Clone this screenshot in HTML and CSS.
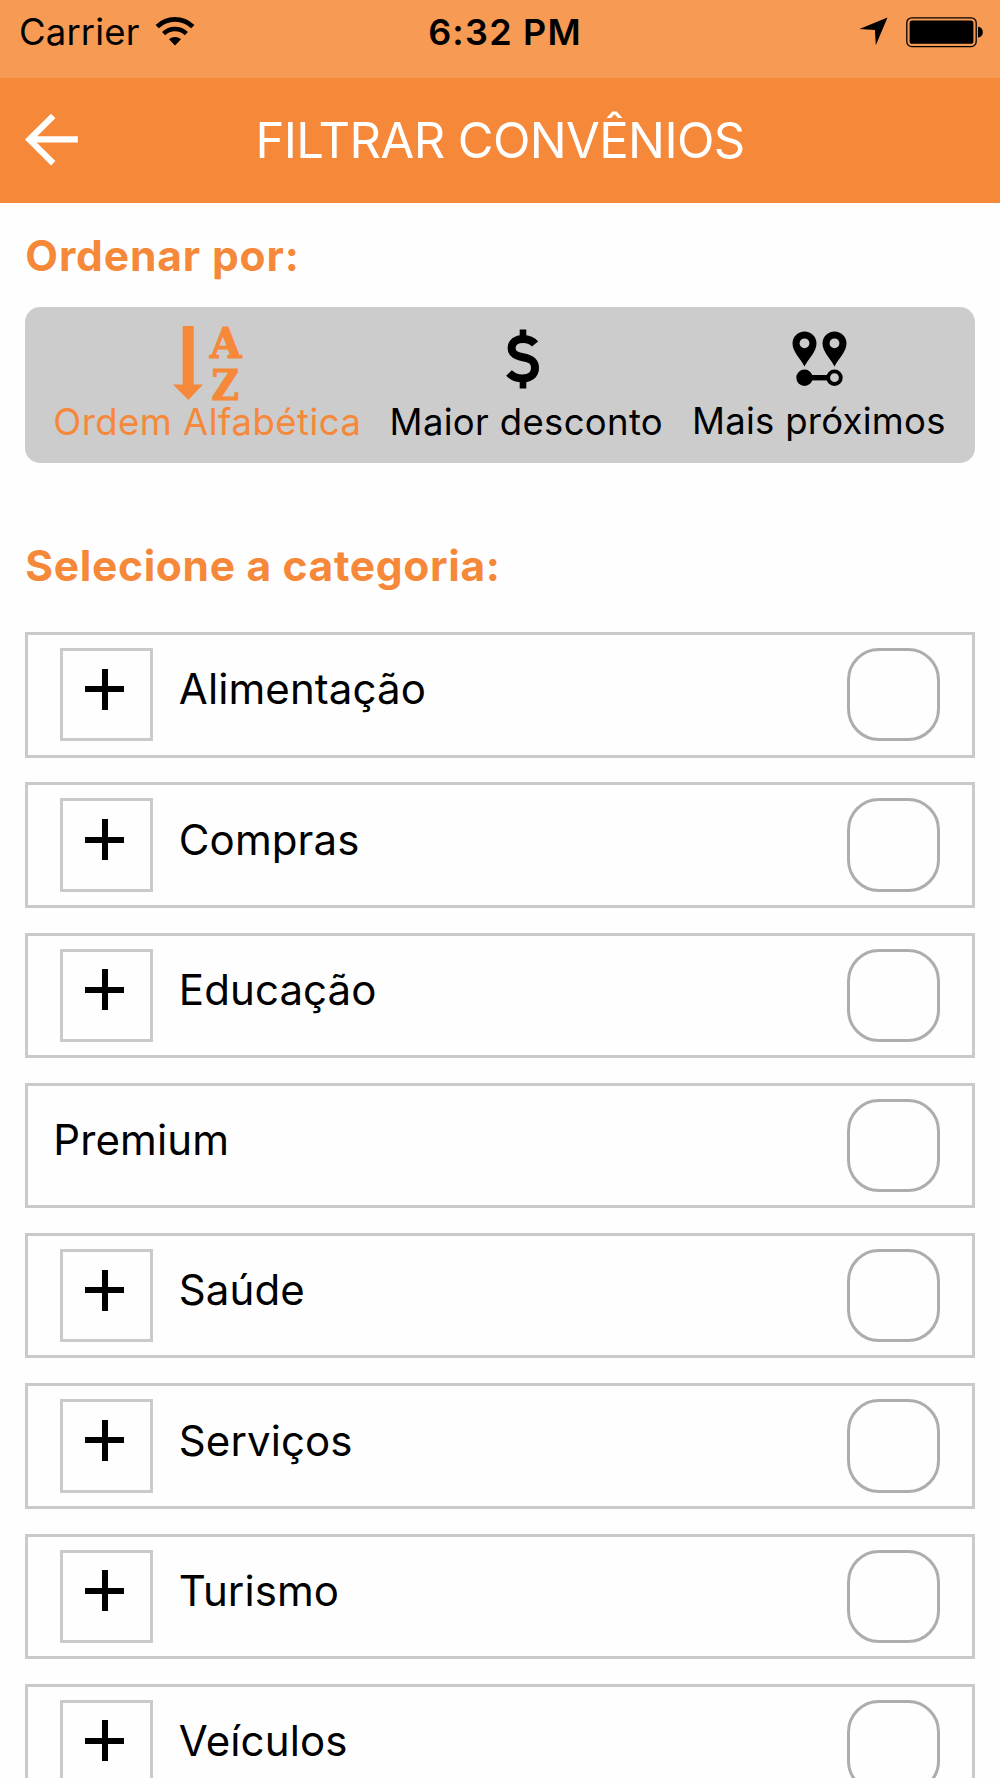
FILE: index.html
```html
<!DOCTYPE html>
<html lang="pt-BR">
<head>
<meta charset="utf-8">
<title>Filtrar convênios</title>
<link rel="stylesheet" href="styles.css">
</head>
<body>
<div class="status-bar">
  <div class="status-left">
    <span class="carrier">Carrier</span>
    <svg class="wifi" width="40" height="30" viewBox="0 0 40 30" fill="none" stroke="#000">
      <path d="M2.200 9.600a25.500 25.500 0 0 1 35.600 0" stroke-width="4.600"/>
      <path d="M8.600 16.600a16.400 16.400 0 0 1 22.800 0" stroke-width="4.400"/>
      <path d="M20 28.500l-6-6.200a8.700 8.700 0 0 1 12 0z" fill="#000" stroke="none"/>
    </svg>
  </div>
  <span class="time">6:32 PM</span>
  <div class="status-right">
    <svg width="29" height="29" viewBox="0 0 29 29"><path d="M28.500.5L16.800 28.200l-.9-15.300L.5 12z"/></svg>
    <svg width="78" height="31" viewBox="0 0 78 31">
      <rect x=".8" y=".8" width="69.400" height="28.800" rx="5" fill="none" stroke="#000" stroke-width="1.300"/>
      <rect x="3.600" y="3.600" width="63.800" height="23.200" rx="2.600"/>
      <path d="M72 9.800c6.400 0 6.400 10.800 0 10.800z"/>
    </svg>
  </div>
</div>
<header class="nav-bar">
  <svg class="back" width="54" height="54" viewBox="0 0 54 54" fill="none" stroke="#fff" stroke-width="6.200">
    <path d="M28.200 3L4.400 26.600l23.800 23.600M4 26.400h48.800"/>
  </svg>
  <h1 class="title">FILTRAR CONVÊNIOS</h1>
</header>
<main class="content">
  <h2 class="heading">Ordenar por:</h2>
  <div class="segments">
    <div class="segment alpha active">
      <svg width="70" height="76" viewBox="0 0 70 76">
        <path d="M9.700 2h11v58.500H30L15.300 76 0 60.500h9.700z"/>
        <text class="slab" x="37" y="33.500" textLength="31.500" lengthAdjust="spacingAndGlyphs">A</text>
        <text class="slab" x="38.500" y="75.500" textLength="27.500" lengthAdjust="spacingAndGlyphs">Z</text>
      </svg>
      <span>Ordem Alfabética</span>
    </div>
    <div class="segment discount">
      <svg width="34" height="60" viewBox="0 0 34 60" fill="none" stroke="#000">
        <path d="M17 .5v8M17 51v8.500" stroke-width="6.600"/>
        <path d="M29 15C26 11.200 22 9.900 17.200 9.900c-7 0-11.600 3.600-11.600 9.200 0 5.800 4 7.800 11.200 9.100 8 1.400 12.200 3.800 12.200 10.800 0 6.600-5 10.400-12.400 10.400-5.600 0-10-1.800-13.600-5.400" stroke-width="8"/>
      </svg>
      <span>Maior desconto</span>
    </div>
    <div class="segment nearby">
      <svg width="56" height="56" viewBox="0 0 56 56">
        <path fill-rule="evenodd" d="M12.500 35.500C9.500 28.500.5 21 .5 12.400a12 12 0 0 1 24 0C24.500 21 15.500 28.500 12.500 35.500zM12.500 7.400a4.900 4.900 0 1 0 0 9.800 4.900 4.900 0 0 0 0-9.800z"/>
        <path fill-rule="evenodd" d="M42.500 35.500C39.500 28.500 30.500 21 30.500 12.400a12 12 0 0 1 24 0C54.500 21 45.500 28.500 42.500 35.500zM42.500 7.400a4.900 4.900 0 1 0 0 9.800 4.900 4.900 0 0 0 0-9.800z"/>
        <circle cx="12.500" cy="46.700" r="8.200"/>
        <path d="M12 44h24v5.400H12z"/>
        <circle cx="42.500" cy="46.700" r="6.300" fill="none" stroke="#000" stroke-width="3.800"/>
      </svg>
      <span>Mais próximos</span>
    </div>
  </div>
  <h2 class="heading second">Selecione a categoria:</h2>
  <ul class="categories">
    <li class="row"><span class="expand"></span><span class="label">Alimentação</span><span class="check"></span></li>
    <li class="row"><span class="expand"></span><span class="label">Compras</span><span class="check"></span></li>
    <li class="row"><span class="expand"></span><span class="label">Educação</span><span class="check"></span></li>
    <li class="row plain"><span class="label">Premium</span><span class="check"></span></li>
    <li class="row"><span class="expand"></span><span class="label">Saúde</span><span class="check"></span></li>
    <li class="row"><span class="expand"></span><span class="label">Serviços</span><span class="check"></span></li>
    <li class="row"><span class="expand"></span><span class="label">Turismo</span><span class="check"></span></li>
    <li class="row"><span class="expand"></span><span class="label">Veículos</span><span class="check"></span></li>
  </ul>
</main>
</body>
</html>
```
FILE: styles.css
```css
* { box-sizing: border-box; }

body {
  margin: 0;
  height: 1778px;
  overflow: hidden;
  background: #fefefe;
  color: #000;
  font-family: Inter, "Liberation Sans", sans-serif;
}

svg { display: block; flex: none; overflow: visible; }

.status-bar {
  display: grid;
  grid-template-columns: 1fr auto 1fr;
  height: 78px;
  padding: 0 16px 0 19px;
  background: #f79a54;
  line-height: 65px;
}

.status-left { display: flex; gap: 15.5px; font-size: 36.5px; letter-spacing: .13px; }
.wifi { margin-top: 16.5px; }
.time { padding-left: 7px; font-size: 36px; font-weight: 600; letter-spacing: 1.2px; }
.status-right { display: flex; justify-content: flex-end; gap: 18px; padding-top: 17px; }

.nav-bar {
  display: grid;
  grid-template-columns: 54px 1fr 54px;
  height: 125px;
  padding: 0 25px;
  background: #f6883a;
  color: #fff;
}

.back { margin-top: 35px; }

.title {
  margin: 0;
  font-size: 49px;
  font-weight: 400;
  line-height: 126px;
  letter-spacing: -.62px;
  text-align: center;
}

.content { padding: 28px 25.33px 0; }

.heading {
  margin: 0;
  color: #f6883a;
  font-size: 42.5px;
  font-weight: 700;
  line-height: 49px;
  letter-spacing: .87px;
}

.second { margin-top: 78px; letter-spacing: .67px; }

.segments {
  display: flex;
  align-items: flex-start;
  gap: 32px;
  height: 156.5px;
  margin-top: 26.67px;
  padding-left: 30px;
  border-radius: 15px;
  background: #ccc;
  font-size: 36.5px;
  line-height: 44px;
  white-space: nowrap;
}

.segment { display: flex; flex-direction: column; align-items: center; }
.segment span { margin-top: auto; }
.alpha { width: 304px; height: 137px; padding-top: 17px; letter-spacing: .48px; }
.alpha svg { margin-left: 2px; }
.discount { width: 270px; height: 137px; padding-top: 22px; letter-spacing: .33px; }
.discount svg { margin-right: 6px; }
.nearby { width: 251px; height: 136px; padding-top: 24px; letter-spacing: .27px; }
.nearby svg { margin-left: 3px; }
.active { color: #f6883a; fill: #f6883a; }

.slab {
  font: bold 43px "DejaVu Serif", serif;
  letter-spacing: 0;
  stroke: #f6883a;
  stroke-width: 1.2px;
}

.categories {
  display: flex;
  flex-direction: column;
  gap: 24.9px;
  margin: 42px 0 0;
  padding: 0;
  list-style: none;
}

.row {
  display: flex;
  flex: none;
  align-items: center;
  gap: 26px;
  height: 125.35px;
  padding: 0 31.2px;
  border: 3px solid #cacaca;
}

.plain { padding-left: 25px; }

.expand {
  display: grid;
  place-items: center;
  flex: none;
  width: 93.3px;
  height: 93.3px;
  padding: 0 3px 11px 0;
  border: 3px solid #cacaca;
}

.expand::before {
  content: "";
  width: 39px;
  height: 41px;
  background:
    linear-gradient(#000, #000) center / 39px 6px no-repeat,
    linear-gradient(#000, #000) center / 6px 41px no-repeat;
}

.label {
  flex: 1;
  padding-bottom: 11px;
  font-size: 42px;
  line-height: 50px;
  letter-spacing: .1px;
}

.check {
  flex: none;
  width: 93.3px;
  height: 93.3px;
  border: 3px solid #adadad;
  border-radius: 32px;
}
```
